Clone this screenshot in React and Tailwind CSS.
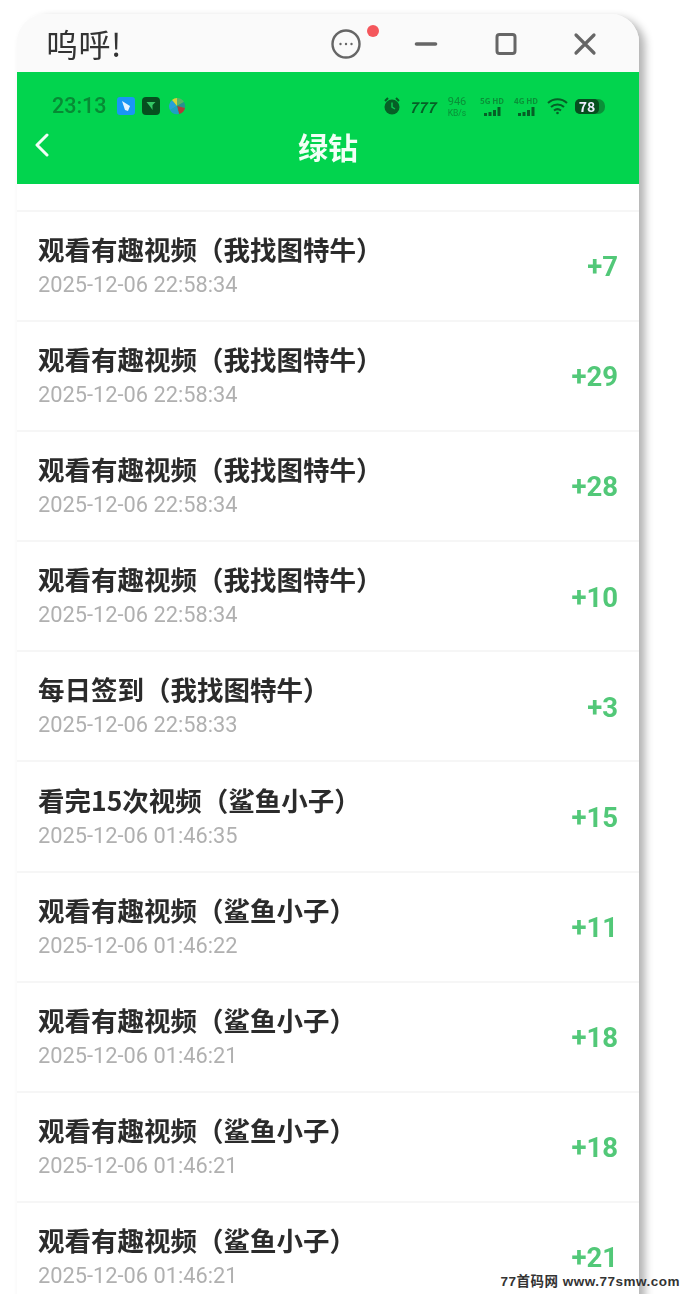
import React from 'react';

const rows = [
  { title: '观看有趣视频（我找图特牛）', time: '2025-12-06 22:58:34', amount: '+7' },
  { title: '观看有趣视频（我找图特牛）', time: '2025-12-06 22:58:34', amount: '+29' },
  { title: '观看有趣视频（我找图特牛）', time: '2025-12-06 22:58:34', amount: '+28' },
  { title: '观看有趣视频（我找图特牛）', time: '2025-12-06 22:58:34', amount: '+10' },
  { title: '每日签到（我找图特牛）', time: '2025-12-06 22:58:33', amount: '+3' },
  { title: '看完15次视频（鲨鱼小子）', time: '2025-12-06 01:46:35', amount: '+15' },
  { title: '观看有趣视频（鲨鱼小子）', time: '2025-12-06 01:46:22', amount: '+11' },
  { title: '观看有趣视频（鲨鱼小子）', time: '2025-12-06 01:46:21', amount: '+18' },
  { title: '观看有趣视频（鲨鱼小子）', time: '2025-12-06 01:46:21', amount: '+18' },
  { title: '观看有趣视频（鲨鱼小子）', time: '2025-12-06 01:46:21', amount: '+21' },
];

function TitleBar() {
  return (
    <div className="flex h-[58px] items-center rounded-t-[28px] bg-[#fafafa] pl-[29px] pt-[2px] text-[#555]">
      <span className="mb-[2px] w-[285px] text-[32px] leading-none tracking-[0.5px] text-[#333]">呜呼!</span>
      <div className="relative h-[30px] w-[30px]">
        <svg className="h-[30px] w-[30px]" viewBox="0 0 30 30" fill="none" stroke="#666" strokeWidth="2.4">
          <circle cx="15" cy="15" r="13.5" />
          <circle cx="9.5" cy="15" r="1.2" fill="#666" stroke="none" />
          <circle cx="15" cy="15" r="1.2" fill="#666" stroke="none" />
          <circle cx="20.5" cy="15" r="1.2" fill="#666" stroke="none" />
        </svg>
        <span className="absolute left-[36px] top-[-4px] h-[12px] w-[12px] rounded-full bg-[#f4575c]" />
      </div>
      <svg className="ml-[53px] h-[24px] w-[24px]" viewBox="0 0 24 24" fill="none" stroke="#666" strokeWidth="3.6" strokeLinecap="round">
        <path d="M2.5 12h19" />
      </svg>
      <svg className="ml-[56px] h-[24px] w-[24px]" viewBox="0 0 24 24" fill="none" stroke="#666" strokeWidth="3">
        <rect x="3" y="2.5" width="18" height="19" rx="2.5" />
      </svg>
      <svg className="ml-[55px] h-[24px] w-[24px]" viewBox="0 0 24 24" fill="none" stroke="#666" strokeWidth="3.2" strokeLinecap="round">
        <path d="M3 3l18 18M21 3L3 21" />
      </svg>
    </div>
  );
}

function Signal({ label, className }) {
  return (
    <div className={`flex w-[28px] flex-col items-center ${className}`}>
      <span className="text-[8px] font-bold leading-[10px] text-[#0a8f38]">{label}</span>
      <svg className="mt-[1px] h-[9px] w-[22px]" viewBox="0 0 22 9" fill="#065f26">
        <rect x="3" y="6" width="3" height="3" />
        <rect x="7.5" y="5" width="3" height="4" />
        <rect x="12" y="3" width="3" height="6" />
        <rect x="16.5" y="0" width="3" height="9" />
      </svg>
    </div>
  );
}

function StatusBar() {
  return (
    <div className="flex h-[30px] items-center pl-[35px]">
      <span className="w-[65px] font-['Roboto',sans-serif] text-[21.500px] font-medium leading-none text-[#078a34]">23:13</span>
      <svg className="h-[18px] w-[18px]" viewBox="0 0 18 18">
        <rect width="18" height="18" rx="3" fill="#1a96f5" />
        <path d="M5 4l8 5-2 5-3-1z" fill="#e6f4ff" />
      </svg>
      <svg className="ml-[7px] h-[18px] w-[18px]" viewBox="0 0 18 18">
        <rect width="18" height="18" rx="4" fill="#064f1f" />
        <path d="M4.5 5h9l-3 3v5l-2-3z" fill="#35c765" />
      </svg>
      <svg className="ml-[8px] h-[18px] w-[18px]" viewBox="0 0 18 18">
        <path d="M9 1a8 8 0 0 1 7 4L9 9z" fill="#58b368" />
        <path d="M16 5a8 8 0 0 1 1 6L9 9z" fill="#2b8f8f" />
        <path d="M17 11a8 8 0 0 1-6 6L9 9z" fill="#b23a3a" />
        <path d="M11 17a8 8 0 0 1-9-4L9 9z" fill="#1f9fc4" />
        <path d="M2 13a8 8 0 0 1 2-10l5 6z" fill="#2a9fd8" />
        <path d="M4 3a8 8 0 0 1 5-2v8z" fill="#d8d23a" />
      </svg>
      <svg className="ml-[197px] h-[18px] w-[18px]" viewBox="0 0 18 18">
        <circle cx="9" cy="10" r="7.5" fill="#065f26" />
        <path d="M2 4l3-3M16 4l-3-3" stroke="#065f26" strokeWidth="2" />
        <path d="M9 5.500V10l3 2" stroke="#0cc24f" strokeWidth="1.500" fill="none" />
      </svg>
      <span className="ml-[8px] w-[26px] text-[15px] font-bold italic leading-none text-[#065f26]">777</span>
      <div className="ml-[9px] flex w-[26px] flex-col items-center font-['Roboto',sans-serif] text-[#0a8f38]">
        <span className="text-[11px] leading-[13px]">946</span>
        <span className="text-[8.500px] leading-[10px]">KB/s</span>
      </div>
      <Signal label="5G HD" className="ml-[8px]" />
      <Signal label="4G HD" className="ml-[6px]" />
      <svg className="ml-[7px] h-[18px] w-[21px]" viewBox="0 0 21 18" fill="none" stroke="#065f26" strokeWidth="2">
        <path d="M1 6c5.500-5 13.500-5 19 0" />
        <path d="M4 10c3.500-3.200 9.500-3.200 13 0" />
        <path d="M7 13.500c2-1.600 5-1.600 7 0" />
        <circle cx="10.500" cy="16" r="1.300" fill="#065f26" stroke="none" />
      </svg>
      <div className="ml-[7px] flex h-[15px] w-[30px] items-center rounded-[5px] rounded-r-[7px] bg-[#0a8f38]">
        <span className="flex h-[15px] w-[24px] items-center justify-center rounded-[5px] bg-[#064f1f] text-[14px] font-bold leading-none text-[#eef]">78</span>
      </div>
    </div>
  );
}

function Header() {
  return (
    <div className="h-[112px] bg-[#02d44e] pt-[19px]">
      <StatusBar />
      <div className="relative mt-[6px] flex h-[44px] items-center justify-center pb-[6px]">
        <svg className="absolute left-[17px] top-[6px] h-[24px] w-[16px]" viewBox="0 0 16 24" fill="none" stroke="#f2fff6" strokeWidth="3" strokeLinecap="round" strokeLinejoin="round">
          <path d="M13 2L3 12l10 10" />
        </svg>
        <span className="text-[30px] font-bold leading-none text-[#f2fff6]">绿钻</span>
      </div>
    </div>
  );
}

function Row({ title, time, amount }) {
  return (
    <div className="flex h-[110.1px] items-center justify-between border-t-2 border-[#f6f6f6] px-[21px] pt-[2px]">
      <div>
        <div className="text-[26.500px] font-bold leading-[36px] text-[#2b2b2b]">{title}</div>
        <div className="font-['Roboto',sans-serif] text-[21.800px] leading-[36px] text-[#b0b0b0]">{time}</div>
      </div>
      <span className="font-['Roboto',sans-serif] text-[27.500px] font-bold leading-none text-[#52c878]">{amount}</span>
    </div>
  );
}

export default function App() {
  return (
    <div className="relative h-[1294px] w-[684px] overflow-hidden bg-white font-['Noto_Sans_CJK_SC','Noto_Sans',sans-serif]">
      <div className="ml-[17px] mt-[14px] h-[1400px] w-[622px] rounded-t-[28px] bg-white shadow-[6px_4px_8px_rgba(0,0,0,0.3)] blur-[0.5px]">
        <TitleBar />
        <Header />
        <div className="h-[26px]" />
        {rows.map((row, i) => (
          <Row key={i} {...row} />
        ))}
      </div>
      <div className="absolute bottom-[2px] right-[4px] font-['Liberation_Sans','Noto_Sans_CJK_SC',sans-serif] text-[13.500px] font-bold leading-[20px] tracking-[0.5px] text-[#333]">
        77首码网 www.77smw.com
      </div>
    </div>
  );
}
